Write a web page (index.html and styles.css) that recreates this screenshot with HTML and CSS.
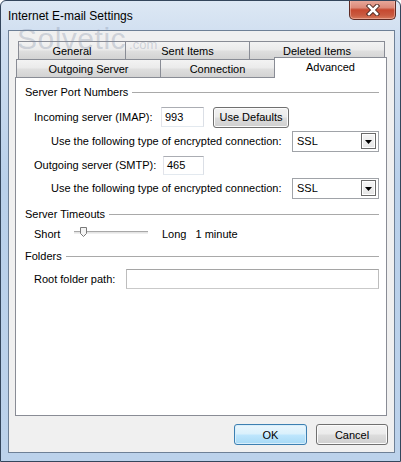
FILE: index.html
```html
<!DOCTYPE html>
<html>
<head>
<meta charset="utf-8">
<title>Internet E-mail Settings</title>
<link rel="stylesheet" href="styles.css">
</head>
<body>
<div class="window">
  <div class="titlebar">
    <span class="title">Internet E-mail Settings</span>
    <div class="close">
      <svg width="16" height="12" viewBox="0 0 16 12">
        <path d="M4 2 L12 10 M12 2 L4 10" stroke="#4b2620" stroke-width="4.4" stroke-linecap="square" fill="none"/>
        <path d="M4 2 L12 10 M12 2 L4 10" stroke="#ffffff" stroke-width="2.6" stroke-linecap="square" fill="none"/>
      </svg>
    </div>
  </div>
  <div class="client">
    <div class="tabs">
      <div class="tabrow tabrow-back">
        <div class="tab tab-general">General</div>
        <div class="tab tab-sent">Sent Items</div>
        <div class="tab tab-deleted">Deleted Items</div>
      </div>
      <div class="tabrow tabrow-front">
        <div class="tab tab-outgoing">Outgoing Server</div>
        <div class="tab tab-connection">Connection</div>
        <div class="tab tab-advanced">Advanced</div>
      </div>
    </div>
    <div class="panel">
      <div class="group-head"><span>Server Port Numbers</span><i class="rule"></i></div>
      <div class="row row-incoming">
        <span class="lbl lbl-incoming">Incoming server (IMAP):</span>
        <div class="textbox tb-incoming">993</div>
        <div class="btn btn-defaults">Use Defaults</div>
      </div>
      <div class="row row-enc1">
        <span class="lbl lbl-enc">Use the following type of encrypted connection:</span>
        <div class="select"><span>SSL</span><span class="drop"><svg width="7" height="4" viewBox="0 0 7 4"><path d="M0 0 H7 L3.5 4 Z" fill="#000"/></svg></span></div>
      </div>
      <div class="row row-outgoing">
        <span class="lbl lbl-outgoing">Outgoing server (SMTP):</span>
        <div class="textbox tb-outgoing">465</div>
      </div>
      <div class="row row-enc2">
        <span class="lbl lbl-enc">Use the following type of encrypted connection:</span>
        <div class="select"><span>SSL</span><span class="drop"><svg width="7" height="4" viewBox="0 0 7 4"><path d="M0 0 H7 L3.5 4 Z" fill="#000"/></svg></span></div>
      </div>
      <div class="group-head gh-timeouts"><span>Server Timeouts</span><i class="rule"></i></div>
      <div class="row row-slider">
        <span class="lbl lbl-short">Short</span>
        <div class="slider">
          <div class="track"></div>
          <svg class="thumb" width="7" height="10" viewBox="0 0 7 10">
            <path d="M0.5 0.5 H6.5 V6.5 L3.5 9.5 L0.5 6.5 Z" fill="#f4f4f4" stroke="#7a7a7a"/>
          </svg>
        </div>
        <span class="lbl-long">Long</span>
        <span class="lbl-minute">1 minute</span>
      </div>
      <div class="group-head gh-folders"><span>Folders</span><i class="rule"></i></div>
      <div class="row row-root">
        <span class="lbl lbl-root">Root folder path:</span>
        <div class="textbox tb-root"></div>
      </div>
    </div>
    <div class="footer">
      <div class="btn btn-ok">OK</div>
      <div class="btn btn-cancel">Cancel</div>
    </div>
  </div>
  <div class="watermark">Solvetic<span class="wm-com">.com</span></div>
</div>
</body>
</html>
```
FILE: styles.css
```css
* { box-sizing: border-box; }
body {
  margin: 0;
  font-family: "Liberation Sans", Arial, sans-serif;
  font-size: 11px;
  color: #000;
  background: #ffffff;
}
.window {
  position: relative;
  width: 401px;
  height: 462px;
  border: 1px solid #34465c;
  border-radius: 6px 6px 0 0;
  background: linear-gradient(180deg, #dde8f4 0%, #cfdef0 8%, #b9d0ea 40%, #bcd2eb 100%);
  padding: 0 5px 8px 7px;
  display: flex;
  flex-direction: column;
  overflow: hidden;
}
.titlebar {
  height: 29px;
  display: flex;
  align-items: flex-start;
  justify-content: space-between;
  flex-shrink: 0;
}
.title {
  margin-top: 8px;
  line-height: 14px;
  font-size: 12px;
}
.close {
  width: 47px;
  height: 20px;
  margin-top: -1px;
  margin-right: -1px;
  border: 1px solid #5e2b24;
  border-top: none;
  border-radius: 0 0 5px 5px;
  background: linear-gradient(180deg, #e9ab9e 0%, #dc8a79 40%, #c6482f 52%, #c95a40 80%, #d7795c 100%);
  box-shadow: inset 0 0 0 1px rgba(255, 210, 200, 0.45);
  display: flex;
  align-items: center;
  justify-content: center;
}
.client {
  flex: 1;
  border: 1px solid #6e8096;
  background: #f0f0f0;
  padding: 0 6px;
  display: flex;
  flex-direction: column;
}
.tabs {
  margin-top: 10px;
  display: flex;
  flex-direction: column;
}
.tabrow {
  display: flex;
  height: 18px;
  align-items: flex-end;
}
.tabrow-back { margin-left: 3px; }
.tabrow-front { margin-left: 1px; }
.tab {
  height: 18px;
  border: 1px solid #898c95;
  border-bottom: none;
  background: linear-gradient(180deg, #f3f3f3 0%, #ebebeb 45%, #dedede 55%, #d3d3d3 100%);
  display: flex;
  align-items: center;
  justify-content: center;
  padding-top: 1px;
  margin-left: -1px;
}
.tab-general { width: 108px; margin-left: 0; }
.tab-sent { width: 125px; }
.tab-deleted { width: 136px; }
.tab-outgoing { width: 145px; margin-left: 0; }
.tab-connection { width: 115px; }
.tab-advanced {
  width: 113px;
  height: 21px;
  margin-bottom: -1px;
  background: #ffffff;
  position: relative;
  z-index: 1;
  padding-top: 0;
  padding-bottom: 3px;
}
.panel {
  width: 372px;
  height: 339px;
  border: 1px solid #898c95;
  background: #ffffff;
  padding: 6px 7px 0 9px;
  display: flex;
  flex-direction: column;
}
.group-head {
  height: 16px;
  display: flex;
  align-items: center;
  gap: 4px;
}
.rule {
  flex: 1;
  height: 1px;
  background: #a9a9a9;
}
.gh-timeouts { margin-top: 7px; }
.gh-folders { margin-top: 4px; }
.row {
  display: flex;
  align-items: center;
  height: 22px;
  padding-left: 9px;
}
.row-incoming { margin-top: 6px; }
.row-enc1 { margin-top: 2px; }
.row-outgoing { margin-top: 2px; }
.row-enc2 { margin-top: 1px; }
.row-slider { margin-top: 2px; height: 20px; }
.row-root { margin-top: 4px; }
.lbl { flex-shrink: 0; }
.lbl-incoming { width: 127px; }
.lbl-outgoing { width: 129px; }
.lbl-enc { width: 258px; padding-left: 17px; }
.lbl-short { width: 40px; }
.lbl-root { width: 92px; }
.textbox {
  height: 20px;
  border: 1px solid;
  border-color: #abadb3 #dbdfe6 #e3e9ef #e2e3ea;
  background: #fff;
  padding-left: 3px;
  display: flex;
  align-items: center;
}
.tb-incoming { width: 43px; }
.tb-outgoing { width: 41px; height: 19px; }
.tb-root { flex: 1; border-color: #a5a5a5 #bdbdbd #c9c9c9 #bdbdbd; }
.btn {
  height: 21px;
  border: 1px solid #707070;
  border-radius: 3px;
  background: linear-gradient(180deg, #f2f2f2 0%, #ebebeb 48%, #dddddd 52%, #cfcfcf 100%);
  box-shadow: inset 0 0 0 1px #fbfbfb;
  display: flex;
  align-items: center;
  justify-content: center;
  flex-shrink: 0;
}
.btn-defaults { width: 76px; margin-left: 9px; }
.select {
  width: 87px;
  height: 21px;
  border: 1px solid #a0a3a8;
  background: #fff;
  display: flex;
  align-items: center;
  justify-content: space-between;
  padding: 0 2px 0 4px;
}
.drop {
  width: 15px;
  height: 16px;
  border: 1px solid #6a6a6a;
  background: linear-gradient(180deg, #f6f6f6 0%, #e6e6e6 100%);
  box-shadow: inset 0 0 0 1px #ffffff;
  display: flex;
  align-items: center;
  justify-content: center;
  padding-top: 1px;
}
.slider {
  position: relative;
  width: 74px;
  height: 12px;
  display: flex;
  align-items: center;
  margin-top: -4px;
}
.track {
  width: 100%;
  height: 3px;
  background: #e4e4e4;
  border-top: 1px solid #a8a8a8;
  border-bottom: 1px solid #efefef;
}
.thumb {
  position: absolute;
  left: 6px;
  top: 1px;
}
.lbl-long { margin-left: 14px; }
.lbl-minute { margin-left: 9px; }
.footer {
  margin-top: 8px;
  display: flex;
  justify-content: flex-end;
  gap: 9px;
}
.btn-ok {
  width: 73px;
  border-color: #3c7fb1;
  background: linear-gradient(180deg, #eaf6fd 0%, #d9f0fc 48%, #bee6fd 52%, #a7d9f5 100%);
  box-shadow: inset 0 0 0 1px #d8eefb;
}
.btn-cancel { width: 72px; }
.watermark {
  position: absolute;
  left: 16px;
  top: 27px;
  font-size: 30px;
  line-height: 22px;
  letter-spacing: 0.5px;
  color: rgba(120, 135, 160, 0.3);
  pointer-events: none;
}
.wm-com {
  font-size: 13px;
  letter-spacing: 0;
  margin-left: 3px;
}
```
